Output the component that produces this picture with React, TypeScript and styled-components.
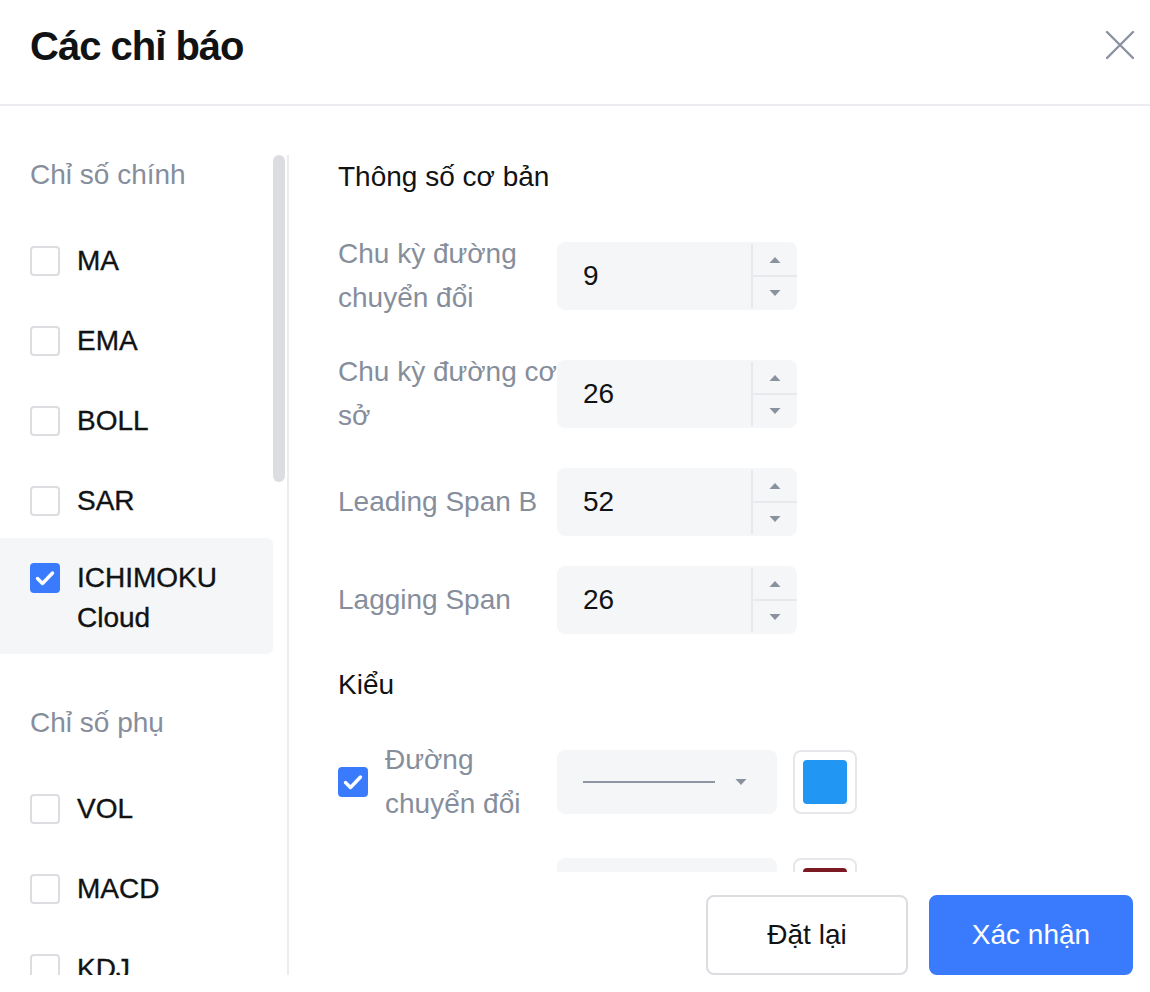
import React from 'react';
import styled, { createGlobalStyle } from 'styled-components';

const GlobalStyle = createGlobalStyle`
  html, body {
    margin: 0;
    padding: 0;
    background: #ffffff;
  }
  body {
    font-family: "Liberation Sans", Arial, sans-serif;
    color: #111214;
  }
  * { box-sizing: border-box; }
`;

const Modal = styled.div`
  width: 1150px;
  height: 992px;
  display: flex;
  flex-direction: column;
  background: #fff;
  overflow: hidden;
`;

const Header = styled.div`
  height: 106px;
  flex-shrink: 0;
  display: flex;
  align-items: flex-start;
  justify-content: space-between;
  padding: 26px 15px 0 30px;
  border-bottom: 2px solid #ebebf0;
`;

const Title = styled.h1`
  margin: 0;
  font-size: 40px;
  line-height: 40px;
  font-weight: 700;
  letter-spacing: -1px;
  color: #111214;
`;

const CloseButton = styled.button`
  margin-top: 4px;
  width: 30px;
  height: 30px;
  padding: 0;
  border: 0;
  background: transparent;
  cursor: pointer;
  display: flex;
`;

const Body = styled.div`
  flex: 1;
  min-height: 0;
  display: flex;
  padding: 49px 0 17px;
`;

const Sidebar = styled.div`
  position: relative;
  width: 289px;
  flex-shrink: 0;
  border-right: 2px solid #ebebf0;
`;

const SideList = styled.div`
  height: 100%;
  overflow: hidden;
  padding-right: 14px;
`;

/* custom scrollbar thumb drawn over the list */
const ScrollThumb = styled.div`
  position: absolute;
  top: 0;
  right: 2px;
  width: 12px;
  height: 327px;
  border-radius: 6px;
  background: #dcdde1;
`;

const Group = styled.div`
  & + & {
    margin-top: 49px;
  }
`;

const GroupTitle = styled.div`
  padding-left: 30px;
  font-size: 28px;
  line-height: 40px;
  color: #868e9c;
  margin-bottom: 26px;
`;

const Item = styled.div<{ $active?: boolean }>`
  display: flex;
  align-items: flex-start;
  gap: 17px;
  padding: 20px 16px 16px 30px;
  margin-bottom: 4px;
  margin-top: ${({ $active }) => ($active ? '-3px' : '0')};
  border-radius: 0 6px 6px 0;
  background: ${({ $active }) => ($active ? '#f5f6f8' : 'transparent')};
  cursor: pointer;
`;

const ItemLabel = styled.span`
  font-size: 28px;
  line-height: 40px;
  color: #111214;
  -webkit-text-stroke: 0.35px #111214;
`;

const Box = styled.span<{ $checked?: boolean; $offset?: number }>`
  width: 30px;
  height: 30px;
  flex-shrink: 0;
  margin-top: ${({ $offset }) => $offset ?? 0}px;
  border-radius: 4px;
  display: flex;
  align-items: center;
  justify-content: center;
  background: ${({ $checked }) => ($checked ? '#3a7bfd' : '#fff')};
  border: 2px solid ${({ $checked }) => ($checked ? '#3a7bfd' : '#dcdde1')};
`;

const Main = styled.div`
  flex: 1;
  min-width: 0;
  display: flex;
  flex-direction: column;
`;

const Content = styled.div`
  flex: 1;
  min-height: 0;
  overflow: hidden;
  padding-left: 49px;
`;

const Heading = styled.div<{ $top?: number; $bottom?: number }>`
  font-size: 28px;
  line-height: 44px;
  color: #111214;
  margin-top: ${({ $top }) => $top ?? 0}px;
  margin-bottom: ${({ $bottom }) => $bottom ?? 33}px;
`;

const Rows = styled.div<{ $gap?: number }>`
  display: flex;
  flex-direction: column;
  gap: ${({ $gap }) => $gap ?? 30}px;
`;

const Row = styled.div`
  display: flex;
  align-items: center;
`;

const FieldLabel = styled.div<{ $width?: number }>`
  width: ${({ $width }) => $width ?? 219}px;
  flex-shrink: 0;
  font-size: 28px;
  line-height: 44px;
  color: #868e9c;
`;

const NumberBox = styled.div`
  width: 240px;
  height: 68px;
  display: flex;
  background: #f5f6f8;
  border-radius: 8px;
  overflow: hidden;
`;

const NumberValue = styled.div`
  flex: 1;
  display: flex;
  align-items: center;
  padding-left: 26px;
  font-size: 28px;
  color: #111214;
`;

const Spinner = styled.div`
  width: 46px;
  margin: 2px 0;
  display: flex;
  flex-direction: column;
  border-left: 2px solid #e8e9ed;
`;

const SpinHalf = styled.div<{ $bottom?: boolean }>`
  flex: 1;
  display: flex;
  align-items: center;
  justify-content: center;
  border-top: ${({ $bottom }) => ($bottom ? '2px solid #e8e9ed' : '0')};
`;

const StyleCheck = styled.div`
  display: flex;
  align-items: center;
  gap: 17px;
`;

const LineSelect = styled.div`
  width: 220px;
  height: 64px;
  display: flex;
  align-items: center;
  gap: 20px;
  padding: 0 30px 0 26px;
  background: #f5f6f8;
  border-radius: 8px;
`;

const LineSample = styled.div`
  flex: 1;
  height: 2px;
  background: #8f97a4;
`;

const Swatch = styled.div<{ $color: string }>`
  width: 64px;
  height: 64px;
  margin-left: 16px;
  padding: 8px;
  border: 2px solid #e6e7eb;
  border-radius: 8px;

  &::after {
    content: '';
    display: block;
    width: 100%;
    height: 100%;
    border-radius: 4px;
    background: ${({ $color }) => $color};
  }
`;

const Footer = styled.div`
  height: 103px;
  flex-shrink: 0;
  display: flex;
  justify-content: flex-end;
  align-items: flex-end;
  gap: 21px;
  padding-right: 17px;
`;

const Button = styled.button<{ $primary?: boolean }>`
  height: 80px;
  width: ${({ $primary }) => ($primary ? 204 : 202)}px;
  border-radius: 8px;
  font-family: "Liberation Sans", Arial, sans-serif;
  font-size: 28px;
  cursor: pointer;
  color: ${({ $primary }) => ($primary ? '#ffffff' : '#111214')};
  background: ${({ $primary }) => ($primary ? '#3a7bfd' : '#ffffff')};
  border: 2px solid ${({ $primary }) => ($primary ? '#3a7bfd' : '#dcdde1')};
`;

const Check = () => (
  <svg width="20" height="16" viewBox="0 0 20 16">
    <path d="M2.5 8.5l5 5L17.5 3" fill="none" stroke="#fff" strokeWidth="3.4" strokeLinecap="round" strokeLinejoin="round" />
  </svg>
);

const Caret = ({ up }: { up?: boolean }) => (
  <svg width="12" height="8" viewBox="0 0 12 8">
    <path d={up ? 'M6 1L11.5 7H0.5Z' : 'M0.5 1H11.5L6 7Z'} fill="#8a919f" />
  </svg>
);

const CheckBox = ({ checked, offset }: { checked?: boolean; offset?: number }) => (
  <Box $checked={checked} $offset={offset}>{checked && <Check />}</Box>
);

const mainItems = ['MA', 'EMA', 'BOLL', 'SAR'];
const subItems = ['VOL', 'MACD', 'KDJ'];

const params = [
  { label: 'Chu kỳ đường chuyển đổi', value: 9 },
  { label: 'Chu kỳ đường cơ sở', value: 26 },
  { label: 'Leading Span B', value: 52 },
  { label: 'Lagging Span', value: 26 },
];

const lines = [
  { label: 'Đường chuyển đổi', color: '#2196f3' },
  { label: 'Đường cơ sở', color: '#7b1a23' },
];

export default function App() {
  return (
    <>
      <GlobalStyle />
      <Modal>
        <Header>
          <Title>Các chỉ báo</Title>
          <CloseButton aria-label="close">
            <svg width="30" height="30" viewBox="0 0 30 30">
              <path d="M2 2L28 28M28 2L2 28" stroke="#8a919f" strokeWidth="2.4" strokeLinecap="round" />
            </svg>
          </CloseButton>
        </Header>

        <Body>
          <Sidebar>
            <SideList>
              <Group>
                <GroupTitle>Chỉ số chính</GroupTitle>
                {mainItems.map((name) => (
                  <Item key={name}>
                    <CheckBox offset={5} />
                    <ItemLabel>{name}</ItemLabel>
                  </Item>
                ))}
                <Item $active>
                  <CheckBox checked offset={5} />
                  <ItemLabel>ICHIMOKU<br />Cloud</ItemLabel>
                </Item>
              </Group>
              <Group>
                <GroupTitle>Chỉ số phụ</GroupTitle>
                {subItems.map((name) => (
                  <Item key={name}>
                    <CheckBox offset={5} />
                    <ItemLabel>{name}</ItemLabel>
                  </Item>
                ))}
              </Group>
            </SideList>
            <ScrollThumb />
          </Sidebar>

          <Main>
            <Content>
              <Heading>Thông số cơ bản</Heading>
              <Rows>
                {params.map((p) => (
                  <Row key={p.label}>
                    <FieldLabel>{p.label}</FieldLabel>
                    <NumberBox>
                      <NumberValue>{p.value}</NumberValue>
                      <Spinner>
                        <SpinHalf><Caret up /></SpinHalf>
                        <SpinHalf $bottom><Caret /></SpinHalf>
                      </Spinner>
                    </NumberBox>
                  </Row>
                ))}
              </Rows>

              <Heading $top={29} $bottom={31}>Kiểu</Heading>
              <Rows $gap={32}>
                {lines.map((l) => (
                  <Row key={l.label}>
                    <StyleCheck>
                      <CheckBox checked />
                      <FieldLabel $width={172}>{l.label}</FieldLabel>
                    </StyleCheck>
                    <LineSelect>
                      <LineSample />
                      <Caret />
                    </LineSelect>
                    <Swatch $color={l.color} />
                  </Row>
                ))}
              </Rows>
            </Content>

            <Footer>
              <Button>Đặt lại</Button>
              <Button $primary>Xác nhận</Button>
            </Footer>
          </Main>
        </Body>
      </Modal>
    </>
  );
}
